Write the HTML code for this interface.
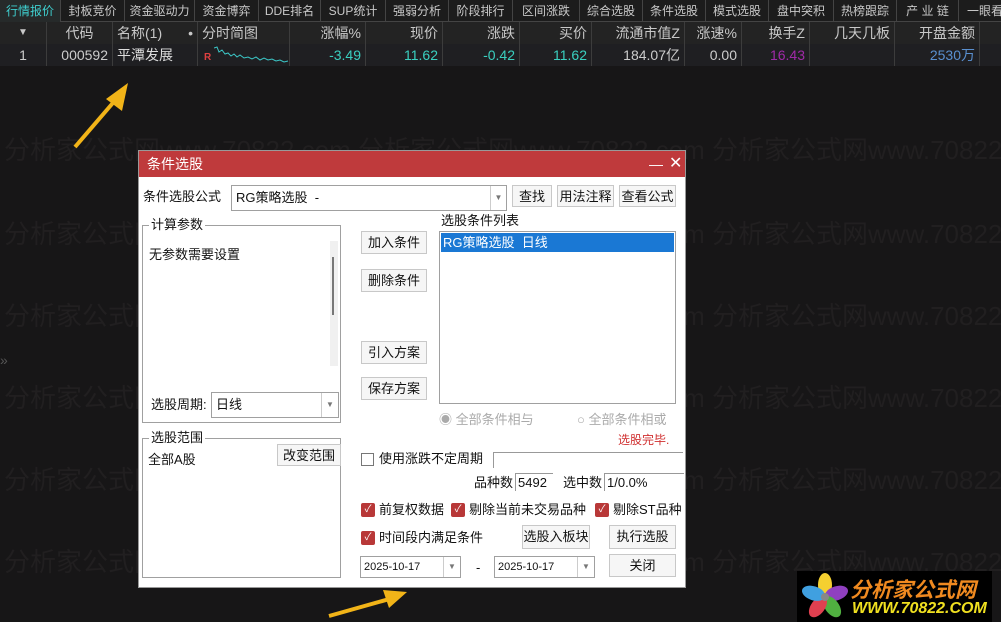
<!DOCTYPE html>
<html><head><meta charset="utf-8"><style>
*{margin:0;padding:0;box-sizing:border-box}
body{width:1007px;height:628px;background:#fff;position:relative;overflow:hidden;font-family:"Liberation Sans","Noto Sans CJK SC",sans-serif}
.scr{position:absolute;left:0;top:0;width:1001px;height:622px;background:#171617;overflow:hidden}
.a{position:absolute;white-space:nowrap}
.tab{position:absolute;top:0;height:22px;line-height:22px;font-size:12px;color:#c8c8c8;text-align:center;border-right:1px solid #444}
.th{position:absolute;top:22px;height:22px;line-height:22px;font-size:14px;color:#c8c8c8;border-right:1px solid #3c3c3c;padding:0 4px;text-align:right;background:#232323}
.td{position:absolute;top:44px;height:22px;line-height:22px;font-size:14px;border-right:1px solid #3c3c3c;padding:0 4px;text-align:right;background:#1f1f22}
.wm{position:absolute;color:#211f20;font-size:26px;white-space:nowrap}
.dlg{position:absolute;left:138px;top:150px;width:548px;height:438px;background:#fff;border:1px solid #999;font-size:13px;line-height:18px;color:#111}
.btn{position:absolute;background:#f6f6f6;border:1px solid #c8c8c8;text-align:center;font-size:13px;line-height:21px}
.box{position:absolute;border:1px solid #a0a0a0;background:#fff}
.cb{position:absolute;width:14px;height:14px;border-radius:2px;background:#b83838;color:#fff;font-size:10px;line-height:14px;text-align:center}
</style></head><body>
<div class="scr">
<div class="wm" style="left:4px;top:130px">分析家公式网www.70822.com 分析家公式网www.70822.com 分析家公式网www.70822.com</div>
<div class="wm" style="left:4px;top:214px">分析家公式网www.70822.com 分析家公式网www.70822.com 分析家公式网www.70822.com</div>
<div class="wm" style="left:4px;top:296px">分析家公式网www.70822.com 分析家公式网www.70822.com 分析家公式网www.70822.com</div>
<div class="wm" style="left:4px;top:378px">分析家公式网www.70822.com 分析家公式网www.70822.com 分析家公式网www.70822.com</div>
<div class="wm" style="left:4px;top:460px">分析家公式网www.70822.com 分析家公式网www.70822.com 分析家公式网www.70822.com</div>
<div class="wm" style="left:4px;top:542px">分析家公式网www.70822.com 分析家公式网www.70822.com 分析家公式网www.70822.com</div>
<div class="a" style="left:0;top:0;width:1001px;height:22px;background:#1c1c1c;border-bottom:1px solid #444"></div>
<div class="tab" style="left:0;width:61px;color:#3fd0d0;background:#262a2a">行情报价</div>
<div class="tab" style="left:61px;width:64px">封板竞价</div>
<div class="tab" style="left:125px;width:70px">资金驱动力</div>
<div class="tab" style="left:195px;width:64px">资金博弈</div>
<div class="tab" style="left:259px;width:62px">DDE排名</div>
<div class="tab" style="left:321px;width:65px">SUP统计</div>
<div class="tab" style="left:386px;width:63px">强弱分析</div>
<div class="tab" style="left:449px;width:64px">阶段排行</div>
<div class="tab" style="left:513px;width:67px">区间涨跌</div>
<div class="tab" style="left:580px;width:63px">综合选股</div>
<div class="tab" style="left:643px;width:63px">条件选股</div>
<div class="tab" style="left:706px;width:63px">模式选股</div>
<div class="tab" style="left:769px;width:65px">盘中突积</div>
<div class="tab" style="left:834px;width:63px">热榜跟踪</div>
<div class="tab" style="left:897px;width:62px">产 业 链</div>
<div class="tab" style="left:959px;width:60px;text-align:left;padding-left:8px">一眼看</div>
<div class="th" style="left:0;width:47px;text-align:center;font-size:10px">▼</div>
<div class="th" style="left:47px;width:66px;text-align:center">代码</div>
<div class="th" style="left:113px;width:85px;text-align:left">名称(1)<span style="float:right">•</span></div>
<div class="th" style="left:198px;width:92px;text-align:left">分时简图</div>
<div class="th" style="left:290px;width:76px">涨幅%</div>
<div class="th" style="left:366px;width:77px">现价</div>
<div class="th" style="left:443px;width:77px">涨跌</div>
<div class="th" style="left:520px;width:72px">买价</div>
<div class="th" style="left:592px;width:93px">流通市值Z</div>
<div class="th" style="left:685px;width:57px">涨速%</div>
<div class="th" style="left:742px;width:68px">换手Z</div>
<div class="th" style="left:810px;width:85px">几天几板</div>
<div class="th" style="left:895px;width:85px">开盘金额</div>
<div class="th" style="left:980px;width:30px"></div>
<div class="td" style="left:0;width:47px;text-align:center;color:#ccc">1</div>
<div class="td" style="left:47px;width:66px;color:#ccc">000592</div>
<div class="td" style="left:113px;width:85px;text-align:left;color:#ddd">平潭发展</div>
<div class="td" style="left:198px;width:92px;text-align:left"><span style="color:#e04040;font-size:10px;font-weight:bold;position:absolute;left:6px;top:3px">R</span><svg style="position:absolute;left:16px;top:0" width="76" height="22"><polyline fill="none" stroke="#3cc8c8" stroke-width="1" points="0,4 3,3 5,8 8,6 11,10 14,9 17,12 20,10 23,13 26,11 30,14 34,13 38,15 42,13 46,16 50,14 54,16 58,15 62,17 66,16 70,18 74,17"/></svg></div>
<div class="td" style="left:290px;width:76px;color:#3ad0c0">-3.49</div>
<div class="td" style="left:366px;width:77px;color:#3ad0c0">11.62</div>
<div class="td" style="left:443px;width:77px;color:#3ad0c0">-0.42</div>
<div class="td" style="left:520px;width:72px;color:#3ad0c0">11.62</div>
<div class="td" style="left:592px;width:93px;color:#ccc">184.07亿</div>
<div class="td" style="left:685px;width:57px;color:#ccc">0.00</div>
<div class="td" style="left:742px;width:68px;color:#a02aa8">16.43</div>
<div class="td" style="left:810px;width:85px"></div>
<div class="td" style="left:895px;width:85px;color:#5a90d0">2530万</div>
<div class="td" style="left:980px;width:30px"></div>
<div class="a" style="left:0;top:352px;color:#555;font-size:14px">»</div>
<svg class="a" style="left:70px;top:75px" width="70" height="80"><path d="M5 72 L48 22" stroke="#f2b418" stroke-width="4"/><polygon points="58,8 36,24 52,36" fill="#f2b418"/></svg>
<svg class="a" style="left:325px;top:588px" width="90" height="32"><path d="M4 28 L68 10" stroke="#f2b418" stroke-width="4"/><polygon points="82,4 58,2 64,20" fill="#f2b418"/></svg>
<div class="a" style="left:797px;top:571px;width:195px;height:52px;background:#000"></div>
<svg class="a" style="left:800px;top:572px" width="50" height="50"><g transform="translate(25,25)"><ellipse rx="7" ry="12" cy="-12" fill="#f5d030"/><ellipse rx="7" ry="12" cy="-12" fill="#9040c0" transform="rotate(72)"/><ellipse rx="7" ry="12" cy="-12" fill="#50b040" transform="rotate(144)"/><ellipse rx="7" ry="12" cy="-12" fill="#e04050" transform="rotate(216)"/><ellipse rx="7" ry="12" cy="-12" fill="#40a0e0" transform="rotate(288)"/><circle r="4" fill="#888"/></g></svg>
<div class="a" style="left:850px;top:574px;font-size:21px;font-weight:bold;font-style:italic;color:#f08a20">分析家公式网</div>
<div class="a" style="left:852px;top:600px;font-size:16px;font-weight:bold;font-style:italic;color:#f0e020">WWW.70822.COM</div>

<div class="dlg">
<div class="a" style="left:0;top:0;width:546px;height:26px;background:#bf3a3c;color:#fff;font-size:14px;line-height:26px;padding-left:8px">条件选股<span style="position:absolute;left:510px">—</span><span style="position:absolute;left:530px;font-size:16px">✕</span></div>
<div class="a" style="left:4px;top:37px">条件选股公式</div>
<div class="box" style="left:92px;top:34px;width:276px;height:26px;line-height:24px;padding-left:4px">RG策略选股 &nbsp;-<span style="position:absolute;right:0;top:0;width:16px;border-left:1px solid #ccc;height:24px;font-size:8px;color:#777;text-align:center">▼</span></div>
<div class="btn" style="left:373px;top:34px;width:40px;height:22px">查找</div>
<div class="btn" style="left:418px;top:34px;width:57px;height:22px">用法注释</div>
<div class="btn" style="left:480px;top:34px;width:57px;height:22px">查看公式</div>
<div class="box" style="left:3px;top:74px;width:199px;height:198px"></div>
<div class="a" style="left:10px;top:65px;background:#fff;padding:0 2px">计算参数</div>
<div class="a" style="left:10px;top:95px">无参数需要设置</div>
<div class="a" style="left:191px;top:90px;width:8px;height:125px;background:#f0f0f0"><div style="position:absolute;left:2px;top:16px;width:2px;height:58px;background:#777"></div></div>
<div class="a" style="left:12px;top:245px">选股周期:</div>
<div class="box" style="left:72px;top:241px;width:128px;height:26px;line-height:24px;padding-left:4px">日线<span style="position:absolute;right:0;top:0;width:17px;border-left:1px solid #ccc;height:24px;font-size:8px;color:#777;text-align:center">▼</span></div>
<div class="box" style="left:3px;top:287px;width:199px;height:140px"></div>
<div class="a" style="left:10px;top:278px;background:#fff;padding:0 2px">选股范围</div>
<div class="a" style="left:9px;top:300px">全部A股</div>
<div class="btn" style="left:138px;top:293px;width:64px;height:22px">改变范围</div>
<div class="btn" style="left:222px;top:80px;width:66px;height:23px">加入条件</div>
<div class="btn" style="left:222px;top:118px;width:66px;height:23px">删除条件</div>
<div class="btn" style="left:222px;top:190px;width:66px;height:23px">引入方案</div>
<div class="btn" style="left:222px;top:226px;width:66px;height:23px">保存方案</div>
<div class="a" style="left:302px;top:61px">选股条件列表</div>
<div class="box" style="left:300px;top:80px;width:237px;height:173px"><div style="margin:1px;background:#1a78d4;color:#fff;height:19px;line-height:19px;padding-left:2px">RG策略选股 &nbsp;日线</div></div>
<div class="a" style="left:300px;top:260px;color:#aaa">◉ 全部条件相与</div>
<div class="a" style="left:438px;top:260px;color:#aaa">○ 全部条件相或</div>
<div class="a" style="left:479px;top:280px;color:#d03030;font-size:12px">选股完毕.</div>
<div class="a" style="left:222px;top:302px;width:13px;height:13px;border:1px solid #777"></div>
<div class="a" style="left:240px;top:299px">使用涨跌不定周期</div>
<div class="a" style="left:354px;top:301px;width:190px;height:16px;border-top:1px solid #999;border-left:1px solid #999"></div>
<div class="a" style="left:335px;top:323px">品种数</div>
<div class="a" style="left:376px;top:322px;width:38px;height:18px;border-top:1px solid #999;border-left:1px solid #999;padding-left:2px">5492</div>
<div class="a" style="left:424px;top:323px">选中数</div>
<div class="a" style="left:465px;top:322px;width:80px;height:18px;border-top:1px solid #999;border-left:1px solid #999;padding-left:2px">1/0.0%</div>
<div class="cb" style="left:222px;top:352px">✓</div><div class="a" style="left:240px;top:350px">前复权数据</div>
<div class="cb" style="left:312px;top:352px">✓</div><div class="a" style="left:330px;top:350px">剔除当前未交易品种</div>
<div class="cb" style="left:456px;top:352px">✓</div><div class="a" style="left:474px;top:350px">剔除ST品种</div>
<div class="cb" style="left:222px;top:380px">✓</div><div class="a" style="left:240px;top:378px">时间段内满足条件</div>
<div class="btn" style="left:383px;top:374px;width:68px;height:24px">选股入板块</div>
<div class="btn" style="left:470px;top:374px;width:67px;height:24px">执行选股</div>
<div class="box" style="left:221px;top:405px;width:101px;height:22px;font-size:11px;line-height:20px;padding-left:3px">2025-10-17<span style="position:absolute;right:0;top:0;width:17px;border-left:1px solid #ccc;height:20px;font-size:8px;color:#777;text-align:center">▼</span></div>
<div class="a" style="left:337px;top:408px">-</div>
<div class="box" style="left:355px;top:405px;width:101px;height:22px;font-size:11px;line-height:20px;padding-left:3px">2025-10-17<span style="position:absolute;right:0;top:0;width:17px;border-left:1px solid #ccc;height:20px;font-size:8px;color:#777;text-align:center">▼</span></div>
<div class="btn" style="left:470px;top:403px;width:67px;height:23px">关闭</div>
</div>
</div>
</body></html>
